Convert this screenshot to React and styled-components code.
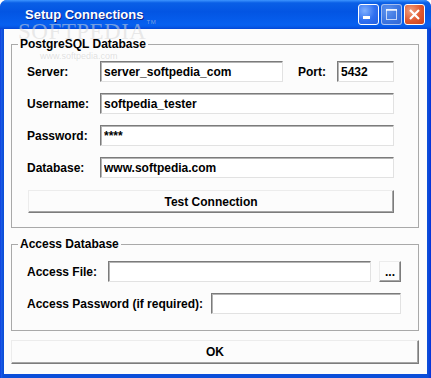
import React from 'react'
import styled, { createGlobalStyle } from 'styled-components'

const GlobalStyle = createGlobalStyle`
  body {
    margin: 0;
    background: #ffffff;
    font-family: "Liberation Sans", Arial, sans-serif;
  }
`

const Window = styled.div`
  position: relative;
  width: 431px;
  height: 378px;
  display: flex;
  flex-direction: column;
  background: linear-gradient(to right, #0831d9 0, #1c5de8 1px, #0b4ed9 3px, #0b4ed9 calc(100% - 3px), #0831d9 100%);
  border-radius: 7px 7px 0 0;
  overflow: hidden;
`

const TitleBar = styled.div`
  height: 29px;
  flex: none;
  display: flex;
  align-items: center;
  padding: 0 6px 0 25px;
  background: linear-gradient(to bottom, #3d95ff 0%, #0a5fe6 10%, #0355e3 40%, #0660f0 86%, #0658e6 93%, #0346d6 100%);
`

const Title = styled.div`
  flex: 1;
  color: #ffffff;
  font-weight: bold;
  font-size: 13px;
  text-shadow: 1px 1px 0 #0b1f86;
`

const CtlButton = styled.div`
  width: 21px;
  height: 21px;
  box-sizing: border-box;
  margin-left: 2px;
  border: 1px solid ${p => (p.$dim ? 'rgba(255,255,255,0.55)' : '#ffffff')};
  border-radius: 3px;
  display: flex;
  align-items: center;
  justify-content: center;
  background: ${p =>
    p.$close
      ? 'radial-gradient(circle at 30% 30%, #f0a080 0%, #e0582f 55%, #c8411c 100%)'
      : p.$dim
        ? 'radial-gradient(circle at 30% 30%, #5e93ee 0%, #3a74e0 60%, #3468d6 100%)'
        : 'radial-gradient(circle at 30% 30%, #7fb0ff 0%, #2f6ff0 55%, #2460e0 100%)'};
`

const Client = styled.div`
  flex: 1;
  margin: 0 4px 4px 4px;
  padding: 8px 8px 8px 7px;
  background: #fcfcfc;
  display: flex;
  flex-direction: column;
  gap: 9px;
`

const Group = styled.fieldset`
  margin: 0;
  padding: 0;
  min-width: 0;
  border: 1px solid #a9a9a9;
`

const Legend = styled.legend`
  margin-left: 6px;
  padding: 0 2px;
  font-size: 12px;
  line-height: 14px;
  font-weight: bold;
  color: #000;
`

const GroupBody = styled.div`
  display: flex;
  flex-direction: column;
  gap: 11px;
  padding: ${p => p.$pad};
`

const Row = styled.div`
  display: flex;
  align-items: center;
`

const Label = styled.div`
  flex: none;
  width: ${p => (p.$width ? `${p.$width}px` : 'auto')};
  margin: ${p => p.$margin || '0'};
  font-size: 12px;
  font-weight: bold;
  color: #000;
  white-space: nowrap;
`

const Field = styled.input`
  box-sizing: border-box;
  height: 21px;
  width: ${p => (p.$width ? `${p.$width}px` : 'auto')};
  flex: ${p => (p.$width ? 'none' : '1')};
  min-width: 0;
  padding: 0 3px;
  border: 1px solid;
  border-color: #7b7b7b #e2e2e2 #e2e2e2 #7b7b7b;
  box-shadow: inset 1px 1px 0 #b4b4b4;
  background: #ffffff;
  font-family: "Liberation Sans", Arial, sans-serif;
  font-size: 12px;
  font-weight: bold;
  color: #000;
  outline: none;
`

const Button = styled.button`
  box-sizing: border-box;
  height: ${p => p.$height}px;
  width: ${p => (p.$width ? `${p.$width}px` : 'auto')};
  flex: none;
  margin: ${p => p.$margin || '0'};
  padding: 0;
  border: 1px solid;
  border-color: #ececec #7c7c7c #7c7c7c #ececec;
  box-shadow: inset -1px -1px 0 #a6a6a6;
  background: #fcfcfc;
  font-family: "Liberation Sans", Arial, sans-serif;
  font-size: 12px;
  font-weight: bold;
  color: #000;
`

const Watermark = styled.div`
  position: absolute;
  left: 18px;
  top: 19px;
  font-family: "Liberation Serif", "Times New Roman", serif;
  font-size: 23px;
  letter-spacing: 0.5px;
  color: rgba(215, 215, 215, 0.55);
  pointer-events: none;
`

const WatermarkTm = styled.span`
  font-family: "Liberation Sans", Arial, sans-serif;
  font-size: 6px;
  vertical-align: top;
`

const WatermarkUrl = styled.div`
  position: absolute;
  left: 40px;
  top: 51px;
  font-size: 9px;
  color: rgba(190, 190, 190, 0.45);
  pointer-events: none;
`

const noop = () => {}

export default function App () {
  return (
    <>
      <GlobalStyle />
      <Window>
        <TitleBar>
          <Title>Setup Connections</Title>
          <CtlButton>
            <svg width='19' height='19' viewBox='0 0 19 19'>
              <rect x='4' y='11' width='7' height='3' fill='#fff' />
            </svg>
          </CtlButton>
          <CtlButton $dim>
            <svg width='19' height='19' viewBox='0 0 19 19'>
              <rect x='4.5' y='4.5' width='10' height='10' fill='none' stroke='rgba(255,255,255,0.7)' />
              <rect x='4' y='4' width='11' height='2' fill='rgba(255,255,255,0.7)' />
            </svg>
          </CtlButton>
          <CtlButton $close>
            <svg width='19' height='19' viewBox='0 0 19 19'>
              <path d='M5 5 L14 14 M14 5 L5 14' stroke='#fff' strokeWidth='2.2' />
            </svg>
          </CtlButton>
        </TitleBar>
        <Client>
          <Group>
            <Legend>PostgreSQL Database</Legend>
            <GroupBody $pad='10px 24px 14px 15px'>
              <Row>
                <Label $width={73}>Server:</Label>
                <Field $width={183} value='server_softpedia_com' onChange={noop} />
                <Label $margin='0 11px 0 15px'>Port:</Label>
                <Field value='5432' onChange={noop} />
              </Row>
              <Row>
                <Label $width={73}>Username:</Label>
                <Field value='softpedia_tester' onChange={noop} />
              </Row>
              <Row>
                <Label $width={73}>Password:</Label>
                <Field value='****' onChange={noop} />
              </Row>
              <Row>
                <Label $width={73}>Database:</Label>
                <Field value='www.softpedia.com' onChange={noop} />
              </Row>
              <Button $height={23} $margin='1px 0 0 1px'>Test Connection</Button>
            </GroupBody>
          </Group>
          <Group>
            <Legend>Access Database</Legend>
            <GroupBody $pad='10px 17px 16px 15px'>
              <Row>
                <Label $width={81}>Access File:</Label>
                <Field value='' onChange={noop} />
                <Button $height={21} $width={22} $margin='0 0 0 8px'>...</Button>
              </Row>
              <Row>
                <Label $width={184}>Access Password (if required):</Label>
                <Field value='' onChange={noop} />
              </Row>
            </GroupBody>
          </Group>
          <Button $height={24}>OK</Button>
        </Client>
        <Watermark>SOFTPEDIA<WatermarkTm>TM</WatermarkTm></Watermark>
        <WatermarkUrl>www.softpedia.com</WatermarkUrl>
      </Window>
    </>
  )
}
